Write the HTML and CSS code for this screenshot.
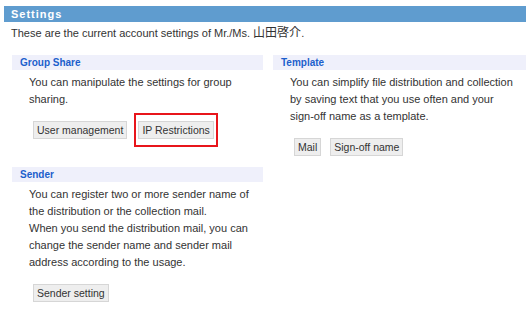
FILE: index.html
```html
<!DOCTYPE html>
<html lang="en">
<head>
    <meta charset="UTF-8">
    <title>Settings</title>
    <link rel="stylesheet" href="styles.css">
</head>
<body>

    <div class="page">
        <h1 class="title-bar">Settings</h1>
        <p class="intro">These are the current account settings of Mr./Ms. <span class="name">山田啓介</span>.</p>

        <div class="columns">
            <div class="column">
                <!-- Group Share -->
                <div class="section">
                    <h3>Group Share</h3>
                    <p>You can manipulate the settings for group sharing.</p>
                    <div class="buttons">
                        <button>User management</button>
                        <span class="highlight"><button>IP Restrictions</button></span>
                    </div>
                </div>

                <!-- Sender -->
                <div class="section">
                    <h3>Sender</h3>
                    <p>You can register two or more sender name of the distribution or the collection mail.<br>
                    When you send the distribution mail, you can change the sender name and sender mail address according to the usage.</p>
                    <div class="buttons">
                        <button>Sender setting</button>
                    </div>
                </div>
            </div>

            <div class="column">
                <!-- Template -->
                <div class="section">
                    <h3>Template</h3>
                    <p>You can simplify file distribution and collection by saving text that you use often and your <span class="nowrap">sign-off</span> name as a template.</p>
                    <div class="buttons">
                        <button>Mail</button>
                        <button>Sign-off name</button>
                    </div>
                </div>
            </div>
        </div>
    </div>

</body>
</html>
```

FILE: styles.css
```css
body {
    margin: 0;
    padding: 0;
    background: #fff;
    color: #333;
    font-family: "Liberation Sans", "Noto Sans CJK JP", sans-serif;
    font-size: 11px;
}

.page {
    padding: 6px 4px 0 4px;
}

.title-bar {
    margin: 0;
    height: 16px;
    line-height: 16px;
    padding-left: 7px;
    background-color: #5f9ccf;
    color: #fff;
    font-size: 11px;
    font-weight: bold;
    letter-spacing: 1px;
}

.intro {
    margin: 4px 0 0 0;
    padding-left: 7px;
    line-height: 14px;
}

.intro .name {
    font-size: 12px;
}

.nowrap {
    white-space: nowrap;
}

.columns {
    display: flex;
    gap: 10px;
    margin-top: 15px;
    padding-left: 8px;
}

.column {
    width: 251px;
}

.column + .column {
    width: 253px;
}

.section {
    margin-bottom: 28px;
}

.section:last-child {
    margin-bottom: 0;
}

.section h3 {
    margin: 0;
    height: 15px;
    line-height: 15px;
    padding-left: 8px;
    background-color: #eff0fb;
    color: #1c5fcc;
    font-size: 10px;
    font-weight: bold;
}

.section p {
    margin: 4px 0 0 0;
    padding: 0 4px 0 17px;
    line-height: 17px;
}

.buttons {
    display: flex;
    align-items: center;
    gap: 9px;
    margin-top: 13px;
    padding-left: 21px;
}

button {
    font-family: "Liberation Sans", "Noto Sans CJK JP", sans-serif;
    font-size: 10.5px;
    color: #333;
    height: 18px;
    padding: 0 3px;
    margin: 0;
    border: 1px solid #d6d6d6;
    background-color: #eeeeee;
}

.highlight {
    display: inline-flex;
    padding: 6px 2px;
    margin: -8px 0 -8px -2px;
    border: 2px solid #e8151b;
}
```
